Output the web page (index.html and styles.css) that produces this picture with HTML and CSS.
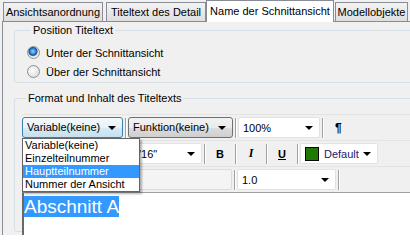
FILE: index.html
```html
<!DOCTYPE html>
<html lang="de">
<head>
  <meta charset="UTF-8">
  <title>Name der Schnittansicht</title>
  <link rel="stylesheet" href="styles.css">
</head>
<body>
  <div class="window">
    <div class="tabs">
      <div class="tab t1">Ansichtsanordnung</div>
      <div class="tab t2">Titeltext des Detail</div>
      <div class="tab active">Name der Schnittansicht</div>
      <div class="tab t4">Modellobjekte</div>
    </div>

    <div class="panel">
      <fieldset class="group position">
        <legend>Position Titeltext</legend>
        <label class="radio"><span class="dot checked"></span>Unter der Schnittansicht</label>
        <label class="radio"><span class="dot"></span>Über der Schnittansicht</label>
      </fieldset>

      <fieldset class="group format">
        <legend>Format und Inhalt des Titeltexts</legend>

        <div class="strip">
          <div class="drop focus">Variable(keine)<span class="arrow"></span></div>
          <span class="sep"></span>
          <div class="drop func">Funktion(keine)<span class="arrow"></span></div>
          <span class="sep"></span>
          <div class="combo pct">100%<span class="arrow"></span></div>
          <span class="sep"></span>
          <span class="pilcrow">¶</span>
        </div>

        <div class="strip">
          <div class="combo font"><span class="font-name">'16"</span><span class="arrow"></span></div>
          <span class="sep"></span>
          <span class="tool bold">B</span>
          <span class="sep"></span>
          <span class="tool italic">I</span>
          <span class="sep"></span>
          <span class="tool under">U</span>
          <span class="sep"></span>
          <div class="combo color"><span class="swatch"></span>Default<span class="arrow"></span></div>
        </div>

        <div class="strip">
          <div class="combo blank"></div>
          <span class="sep"></span>
          <div class="combo spacing">1.0<span class="arrow"></span></div>
          <span class="sep"></span>
        </div>

        <div class="editor"><span class="selected">Abschnitt A</span></div>
      </fieldset>

      <ul class="droplist">
        <li>Variable(keine)</li>
        <li>Einzelteilnummer</li>
        <li class="hot">Hauptteilnummer</li>
        <li>Nummer der Ansicht</li>
      </ul>
    </div>
  </div>
</body>
</html>
```

FILE: styles.css
```css
body {
  margin: 0;
  width: 410px;
  height: 245px;
  overflow: hidden;
  background: #fff;
  font-family: 'Liberation Sans', Arial, sans-serif;
  font-size: 11px;
  color: #000;
}

.window {
  height: 235px;
  background: #f0f0f0;
  overflow: hidden;
}

/* tab headers */
.tabs {
  display: flex;
  align-items: flex-end;
  height: 21px;
  padding-left: 3px;
}

.tab {
  flex-shrink: 0;
  height: 19px;
  line-height: 18px;
  margin-right: 3px;
  border: 1px solid #898c95;
  border-bottom: none;
  background: linear-gradient(#f3f3f3, #dedede);
  box-sizing: border-box;
  white-space: nowrap;
  text-align: center;
}

.t1 {
  width: 100px;
}

.t2 {
  width: 100px;
  margin-right: 0;
}

.t4 {
  width: 73px;
}

.tab.active {
  width: 128px;
  height: 22px;
  line-height: 21px;
  background: #fff;
  margin-right: 1px;
  position: relative;
  top: 1px;
  z-index: 1;
}

/* page */
.panel {
  position: relative;
  height: 220px;
  margin-left: 2px;
  border-left: 1px solid #898c95;
  border-top: 1px solid #898c95;
  padding: 0 0 0 11px;
}

.group {
  margin: 0;
  border: 1px solid #d5dfe5;
  border-radius: 3px;
  width: 420px;
  box-sizing: border-box;
  padding: 0 0 0 12px;
}

.group legend {
  padding: 0 2px;
  margin-left: 4px;
  line-height: 13px;
}

.position {
  margin-top: 2px;
  height: 59px;
  padding-top: 6px;
}

.radio {
  display: flex;
  align-items: center;
  height: 19px;
}

.dot {
  width: 11px;
  height: 11px;
  margin-right: 6px;
  border: 1px solid #8e8f8f;
  border-radius: 50%;
  background: radial-gradient(circle at 40% 40%, #fdfdfd, #d4d4d4);
  box-sizing: content-box;
}

.dot.checked {
  background: radial-gradient(circle at 45% 40%, #9ad5ff 0, #2a7fd0 3px, #1b4f8f 4px, #d9d9d9 5px, #f4f4f4 6px);
}

.format {
  margin-top: 9px;
  height: 140px;
  padding: 9px 0 0 7px;
}

/* toolbar rows */
.strip {
  display: flex;
  align-items: center;
  height: 26px;
  border-top: 1px solid #e3e3e3;
  box-sizing: border-box;
}

.sep {
  width: 1px;
  height: 20px;
  margin: 0 2px;
  background: #a0a0a0;
  box-shadow: 1px 0 #fff;
}

.drop {
  position: relative;
  height: 21px;
  line-height: 19px;
  padding-left: 4px;
  border: 1px solid #707070;
  border-radius: 3px;
  background: linear-gradient(#f2f2f2 0, #ebebeb 50%, #dddddd 51%, #cfcfcf);
  box-sizing: border-box;
}

.drop.focus {
  width: 101px;
  border-color: #3c7fb1;
  background: linear-gradient(#f4f9fc 0, #e6f2f9 50%, #d7ebf6 51%, #c5e0ef);
}

.drop.func {
  width: 105px;
}

.combo {
  position: relative;
  height: 21px;
  line-height: 20px;
  padding-left: 4px;
  background: #fff;
  border: 1px solid #e2e2e2;
  border-radius: 2px;
  box-sizing: border-box;
}

.pct {
  width: 82px;
}

.arrow {
  position: absolute;
  right: 6px;
  top: 8px;
  border: 4px solid transparent;
  border-top: 4px solid #000;
  border-bottom: none;
}

.pilcrow {
  margin-left: 10px;
  font-weight: bold;
  font-size: 12px;
}

.font {
  width: 180px;
  padding-left: 116px;
}

.tool {
  width: 26px;
  text-align: center;
  font-weight: bold;
}

.tool.italic {
  font-family: 'Liberation Serif', serif;
  font-style: italic;
  font-size: 12px;
}

.tool.under {
  text-decoration: underline;
}

.color {
  display: flex;
  align-items: center;
  width: 78px;
  color: #1b1b6e;
}

.swatch {
  width: 14px;
  height: 14px;
  margin-right: 5px;
  background: #1f7a05;
  border: 1px solid #000;
  box-sizing: border-box;
}

.blank {
  width: 210px;
  border-color: #dcdcdc;
  background: #f4f4f4;
}

.spacing {
  width: 99px;
}

/* text editor */
.editor {
  height: 48px;
  background: #fff;
  border-top: 1px solid #a0a0a0;
  border-left: 2px solid #696969;
  font-size: 19px;
  line-height: 21px;
  padding-top: 3px;
}

.selected {
  background: #3399ff;
  color: #fff;
}

/* open dropdown */
.droplist {
  position: absolute;
  left: 19px;
  top: 116px;
  width: 116px;
  margin: 0;
  padding: 0;
  list-style: none;
  background: #fff;
  border: 1px solid #646464;
  box-shadow: 2px 2px 2px rgba(0, 0, 0, 0.3);
  z-index: 2;
}

.droplist li {
  height: 13px;
  line-height: 13px;
  padding-left: 2px;
}

.droplist li.hot {
  background: #3399ff;
  color: #fff;
}
```
